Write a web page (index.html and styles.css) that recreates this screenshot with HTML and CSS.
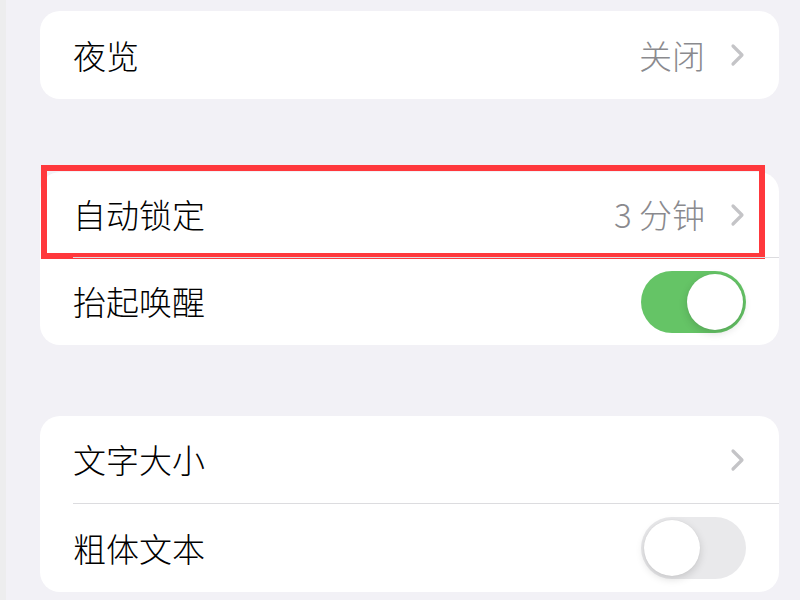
FILE: index.html
```html
<!DOCTYPE html>
<html lang="zh-CN">
<head>
    <meta charset="UTF-8">
    <meta name="viewport" content="width=device-width, initial-scale=1.0">
    <title>显示与亮度</title>
    <link rel="stylesheet" href="styles.css">
</head>
<body>
    <div class="page">
        <div class="group group-first">
            <div class="row">
                <div class="cell">
                    <span class="label">夜览</span>
                    <span class="value">关闭</span>
                    <svg class="chevron" width="15" height="24" viewBox="0 0 15 24"><path d="M3 3 L12 12 L3 21" fill="none" stroke="#c4c4c7" stroke-width="3.2" stroke-linecap="round" stroke-linejoin="round"/></svg>
                </div>
            </div>
        </div>

        <div class="group group-second">
            <div class="row row-short">
                <div class="cell">
                    <span class="label">自动锁定</span>
                    <span class="value"><span class="digit">3</span>分钟</span>
                    <svg class="chevron" width="15" height="24" viewBox="0 0 15 24"><path d="M3 3 L12 12 L3 21" fill="none" stroke="#c4c4c7" stroke-width="3.2" stroke-linecap="round" stroke-linejoin="round"/></svg>
                </div>
                <div class="highlight"></div>
            </div>
            <div class="row">
                <div class="cell">
                    <span class="label">抬起唤醒</span>
                    <span class="toggle on"><span class="knob"></span></span>
                </div>
            </div>
        </div>

        <div class="group">
            <div class="row row-mid">
                <div class="cell">
                    <span class="label">文字大小</span>
                    <svg class="chevron" width="15" height="24" viewBox="0 0 15 24"><path d="M3 3 L12 12 L3 21" fill="none" stroke="#c4c4c7" stroke-width="3.2" stroke-linecap="round" stroke-linejoin="round"/></svg>
                </div>
            </div>
            <div class="row row-tall">
                <div class="cell">
                    <span class="label">粗体文本</span>
                    <span class="toggle"><span class="knob"></span></span>
                </div>
            </div>
        </div>
    </div>
</body>
</html>
```
FILE: styles.css
```css
body {
    margin: 0;
    background: #f2f1f6;
    font-family: "Noto Sans CJK SC", "Noto Sans", sans-serif;
    font-weight: 300;
    color: #000;
}
.page {
    border-left: 6px solid #ededee;
    padding: 11px 21px 0 34px;
    height: 589px;
}
.group {
    background: #fff;
    border-radius: 20px;
}
.group-first {
    margin-bottom: 73px;
}
.group-second {
    margin-bottom: 71px;
}
.row {
    position: relative;
    padding-left: 33px;
}
.row + .row .cell {
    border-top: 1px solid #dcdcdf;
}
.cell {
    display: flex;
    align-items: center;
    height: 88px;
    padding-right: 33px;
    box-sizing: border-box;
}
.row-short .cell {
    height: 85px;
}
.row-mid .cell {
    height: 87px;
}
.row-tall .cell {
    height: 89px;
}
.label {
    flex: 1;
    font-size: 33px;
    line-height: 1;
}
.value {
    font-size: 33px;
    line-height: 1;
    color: #8a8a8e;
    margin-right: 25px;
}
.digit {
    display: inline-block;
    width: 25px;
}
.chevron {
    display: block;
    margin-right: 1px;
}
.toggle {
    position: relative;
    width: 105px;
    height: 62px;
    border-radius: 31px;
    background: #e9e9eb;
}
.toggle.on {
    background: #65c466;
}
.knob {
    position: absolute;
    top: 3px;
    left: 3px;
    width: 56px;
    height: 56px;
    border-radius: 50%;
    background: #fff;
    box-shadow: 0 3px 8px rgba(0, 0, 0, 0.15), 0 0 1px rgba(0, 0, 0, 0.1);
}
.toggle.on .knob {
    left: 46px;
}
.highlight {
    position: absolute;
    top: -7px;
    left: 1px;
    right: 14px;
    bottom: -2px;
    border: 6px solid #ff383c;
}
```
